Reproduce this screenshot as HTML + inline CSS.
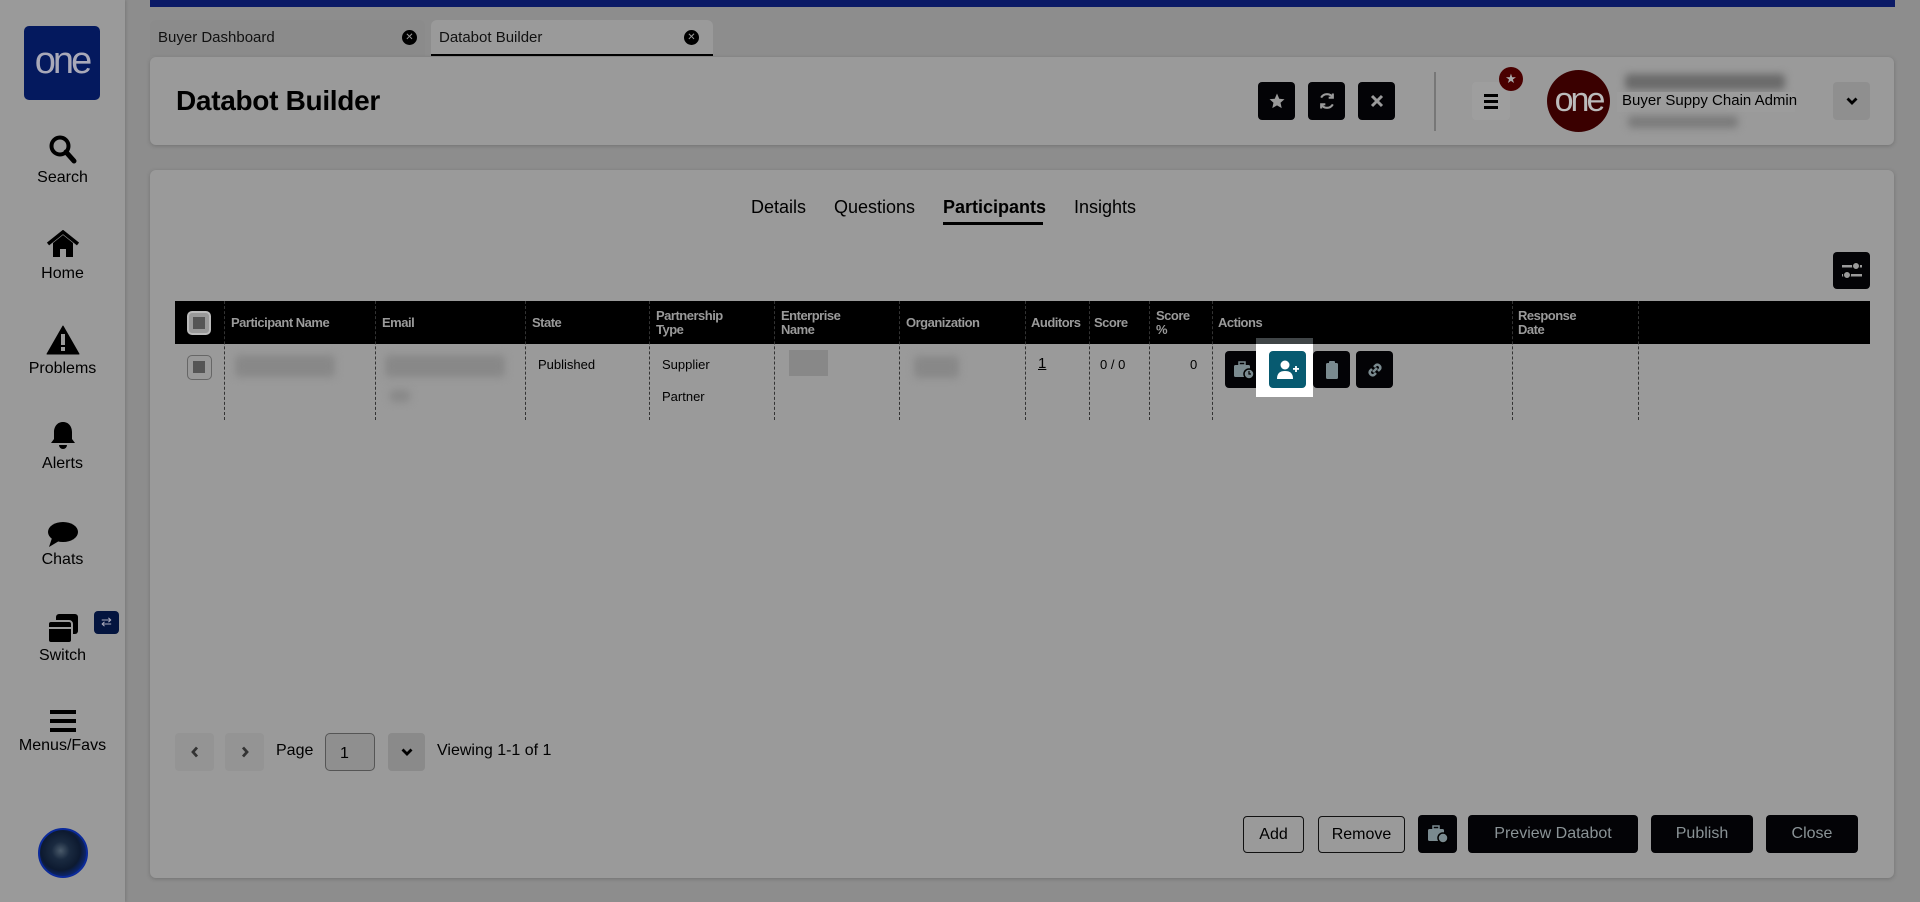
<!DOCTYPE html>
<html><head><meta charset="utf-8"><style>
*{box-sizing:border-box;margin:0;padding:0}
body{width:1920px;height:902px;background:#8d8d8d;font-family:"Liberation Sans",Arial,sans-serif;position:relative;overflow:hidden;color:#000}
.a{position:absolute}
.side{left:0;top:0;width:125px;height:902px;background:#9a9a9a;box-shadow:1px 0 3px rgba(0,0,0,.15)}
.logo{left:24px;top:26px;width:76px;height:74px;background:#04195e;border-radius:5px;color:#a9a9b8;font-size:38px;letter-spacing:-3px;text-align:center;line-height:70px}
.nav{left:0;width:125px;text-align:center;font-size:16px;color:#000}
.blue{left:150px;top:0;width:1745px;height:7px;background:#0b1a66}
.tab{top:20px;height:36px;border-radius:6px 6px 0 0;font-size:15px;padding:9px 8px;color:#111}
.card{background:#9a9a9a;border-radius:6px;box-shadow:0 1px 4px rgba(0,0,0,.2)}
.bb{background:#030306;border-radius:4px;color:#9aa;display:flex;align-items:center;justify-content:center}
.th{top:301px;height:43px;font-weight:bold;font-size:13px;color:#9a9a9a;line-height:14px;display:flex;align-items:center;letter-spacing:-.5px}
.dv{top:301px;height:119px;border-left:1px dashed #333;width:0}
.td{font-size:13px;color:#000}
.blur{background:#888;filter:blur(4px);border-radius:4px}
.btn{height:37px;border-radius:4px;font-size:16px;display:flex;align-items:center;justify-content:center}
.out{border:1px solid #111;color:#000}
.pg{display:flex;align-items:center;justify-content:center}
</style></head><body>
<div class="a side"></div>
<div class="a logo">one</div>
<div class="a nav" style="top:134px"><svg width="30" height="32" viewBox="0 0 30 32"><circle cx="12" cy="12" r="8.5" fill="none" stroke="#000" stroke-width="4"/><path d="M18 18l8 9" stroke="#000" stroke-width="5" stroke-linecap="round"/></svg><div style="margin-top:-2px">Search</div></div>
<div class="a nav" style="top:230px"><svg width="34" height="28" viewBox="0 0 34 28"><path d="M2 14L17 2l15 12" fill="none" stroke="#000" stroke-width="3.5"/><path d="M7 13l10-8 10 8v14h-7v-8h-6v8H7z"/></svg><div style="margin-top:2px">Home</div></div>
<div class="a nav" style="top:325px"><svg width="34" height="30" viewBox="0 0 34 30"><path d="M17 1L33 29H1z" stroke="#000" stroke-width="1" stroke-linejoin="round"/><rect x="15" y="9" width="4" height="11" fill="#9a9a9a"/><rect x="15" y="22" width="4" height="4" fill="#9a9a9a"/></svg><div style="margin-top:0">Problems</div></div>
<div class="a nav" style="top:420px"><svg width="30" height="30" viewBox="0 0 30 30"><path d="M15 2c-6 0-9 5-9 10v7l-3 4h24l-3-4v-7c0-5-3-10-9-10z"/><path d="M11 25a4 4 0 008 0z"/></svg><div style="margin-top:0">Alerts</div></div>
<div class="a nav" style="top:520px"><svg width="34" height="28" viewBox="0 0 34 28"><ellipse cx="17" cy="12" rx="15" ry="10"/><path d="M6 18L3 27l10-6z"/></svg><div style="margin-top:-2px">Chats</div></div>
<div class="a nav" style="top:612px"><svg width="34" height="32" viewBox="0 0 34 32"><rect x="10" y="2" width="22" height="20" rx="3"/><rect x="2" y="9" width="24" height="22" rx="3" stroke="#9a9a9a" stroke-width="2"/><rect x="3" y="15" width="22" height="2" fill="#9a9a9a"/></svg><div style="margin-top:-2px">Switch</div></div>
<div class="a" style="left:94px;top:611px;width:25px;height:23px;background:#04153f;border-radius:4px;color:#aab;font-size:13px;text-align:center;line-height:22px">⇄</div>
<div class="a nav" style="top:708px"><svg width="30" height="26" viewBox="0 0 30 26"><rect x="2" y="2" width="26" height="4"/><rect x="2" y="11" width="26" height="4"/><rect x="2" y="20" width="26" height="4"/></svg><div style="margin-top:-2px">Menus/Favs</div></div>
<div class="a" style="left:38px;top:828px;width:50px;height:50px;border-radius:50%;background:radial-gradient(circle at 45% 45%,#4a5a6a 0,#1a2a40 25%,#0d1a30 55%,#0a2a8a 80%,#061540);border:2px solid #0b2a9a"></div>

<div class="a blue"></div>
<div class="a tab" style="left:150px;width:275px;background:#8b8b8b">Buyer Dashboard<span class="a" style="right:8px;top:10px;width:15px;height:15px;border-radius:50%;background:#000;color:#999;font-size:10px;line-height:15px;text-align:center">✕</span></div>
<div class="a tab" style="left:431px;width:282px;background:#9a9a9a;border-bottom:2px solid #000">Databot Builder<span class="a" style="right:14px;top:10px;width:15px;height:15px;border-radius:50%;background:#000;color:#999;font-size:10px;line-height:15px;text-align:center">✕</span></div>

<div class="a card" style="left:150px;top:57px;width:1744px;height:88px"></div>
<div class="a" style="left:176px;top:85px;font-size:28px;font-weight:bold;letter-spacing:-.3px">Databot Builder</div>
<div class="a bb" style="left:1258px;top:82px;width:37px;height:38px"><svg width="18" height="18" viewBox="0 0 24 24"><path fill="#9a9a9a" d="M12 2l3 7 7 .6-5.3 4.7 1.6 7.2L12 17.8 5.7 21.5l1.6-7.2L2 9.6 9 9z"/></svg></div>
<div class="a bb" style="left:1308px;top:82px;width:37px;height:38px"><svg width="20" height="20" viewBox="0 0 24 24" fill="none" stroke="#9a9a9a" stroke-width="2.5"><path d="M19 8a8 8 0 00-14 0M5 16a8 8 0 0014 0"/><path d="M19 3v5h-5M5 21v-5h5"/></svg></div>
<div class="a bb" style="left:1358px;top:82px;width:37px;height:38px"><svg width="14" height="14" viewBox="0 0 14 14" stroke="#9a9a9a" stroke-width="3"><path d="M2 2l10 10M12 2L2 12"/></svg></div>
<div class="a" style="left:1434px;top:72px;width:2px;height:59px;background:#777"></div>
<div class="a" style="left:1472px;top:82px;width:38px;height:38px;background:#9e9e9e;border-radius:4px"><div class="a" style="left:12px;top:12px;width:14px;height:3px;background:#000"></div><div class="a" style="left:12px;top:18px;width:14px;height:3px;background:#000"></div><div class="a" style="left:12px;top:24px;width:14px;height:3px;background:#000"></div></div>
<div class="a" style="left:1499px;top:67px;width:24px;height:24px;border-radius:50%;background:#4a0000;color:#aaa;font-size:13px;text-align:center;line-height:24px">★</div>
<div class="a" style="left:1547px;top:70px;width:63px;height:62px;border-radius:50%;background:#3a0000;color:#bbb;font-size:34px;letter-spacing:-3px;text-align:center;line-height:60px">one</div>
<div class="a blur" style="left:1625px;top:74px;width:160px;height:16px;background:#6a6a6a"></div>
<div class="a" style="left:1617px;top:92px;width:178px;height:20px;background:#9c9c9c"></div>
<div class="a" style="left:1622px;top:92px;font-size:15px">Buyer Suppy Chain Admin</div>
<div class="a blur" style="left:1628px;top:116px;width:110px;height:12px;background:#7a7a7a"></div>
<div class="a pg" style="left:1833px;top:82px;width:37px;height:38px;background:#8f8f8f;border-radius:4px"><svg width="12" height="8" viewBox="0 0 12 8"><path d="M1.5 1.5L6 6l4.5-4.5" fill="none" stroke="#000" stroke-width="2.8"/></svg></div>

<div class="a card" style="left:150px;top:170px;width:1744px;height:708px"></div>
<div class="a" style="left:751px;top:197px;font-size:18px">Details</div>
<div class="a" style="left:834px;top:197px;font-size:18px">Questions</div>
<div class="a" style="left:943px;top:197px;font-size:18px;font-weight:bold">Participants</div>
<div class="a" style="left:943px;top:222px;width:100px;height:3px;background:#000"></div>
<div class="a" style="left:1074px;top:197px;font-size:18px">Insights</div>
<div class="a bb" style="left:1833px;top:252px;width:37px;height:37px"><svg width="24" height="22" viewBox="0 0 24 22" fill="#9a9a9a"><rect x="2" y="5" width="20" height="2.5"/><circle cx="16" cy="6" r="3.5" stroke="#000" stroke-width="1"/><rect x="2" y="14" width="20" height="2.5"/><circle cx="7" cy="15" r="3.5" stroke="#000" stroke-width="1"/></svg></div>

<div class="a" style="left:175px;top:301px;width:1695px;height:43px;background:#000"></div>
<div class="a" style="left:187px;top:311px;width:24px;height:24px;border-radius:5px;background:#999;border:2px solid #bbb"><div style="margin:4px;width:12px;height:12px;background:#555"></div></div>
<div class="a th" style="left:231px">Participant Name</div>
<div class="a th" style="left:382px">Email</div>
<div class="a th" style="left:532px">State</div>
<div class="a th" style="left:656px">Partnership<br>Type</div>
<div class="a th" style="left:781px">Enterprise<br>Name</div>
<div class="a th" style="left:906px">Organization</div>
<div class="a th" style="left:1031px">Auditors</div>
<div class="a th" style="left:1094px">Score</div>
<div class="a th" style="left:1156px">Score<br>%</div>
<div class="a th" style="left:1218px">Actions</div>
<div class="a th" style="left:1518px">Response<br>Date</div>
<div class="a dv" style="left:224px"></div><div class="a dv" style="left:375px"></div><div class="a dv" style="left:525px"></div><div class="a dv" style="left:649px"></div><div class="a dv" style="left:774px"></div><div class="a dv" style="left:899px"></div><div class="a dv" style="left:1025px"></div><div class="a dv" style="left:1089px"></div><div class="a dv" style="left:1149px"></div><div class="a dv" style="left:1212px"></div><div class="a dv" style="left:1512px"></div><div class="a dv" style="left:1638px"></div>

<div class="a" style="left:187px;top:355px;width:25px;height:25px;border-radius:5px;border:1.5px solid #666;background:#999"><div style="margin:5px;width:12px;height:12px;background:#555"></div></div>
<div class="a blur" style="left:235px;top:355px;width:100px;height:22px"></div>
<div class="a blur" style="left:385px;top:355px;width:120px;height:22px"></div>
<div class="a blur" style="left:390px;top:390px;width:20px;height:12px"></div>
<div class="a td" style="left:538px;top:357px">Published</div>
<div class="a td" style="left:662px;top:357px">Supplier</div>
<div class="a td" style="left:662px;top:389px">Partner</div>
<div class="a" style="left:789px;top:350px;width:39px;height:26px;background:#888"></div>
<div class="a blur" style="left:914px;top:356px;width:45px;height:22px"></div>
<div class="a td" style="left:1038px;top:355px;text-decoration:underline;font-size:15px">1</div>
<div class="a td" style="left:1100px;top:357px">0 / 0</div>
<div class="a td" style="left:1190px;top:357px">0</div>

<div class="a bb" style="left:1225px;top:351px;width:37px;height:37px"><svg width="22" height="20" viewBox="0 0 22 20" fill="#7a8a8f"><rect x="6" y="2" width="6" height="3" fill="none" stroke="#7a8a8f" stroke-width="1.5"/><rect x="1" y="5" width="16" height="12" rx="1.5"/><circle cx="16" cy="14" r="5" stroke="#000" stroke-width="1.5"/><path d="M16 11v3h2" stroke="#000" stroke-width="1.2" fill="none"/></svg></div>
<div class="a" style="left:1256px;top:338px;width:57px;height:59px;background:#fff"><div style="height:6px;background:#404547"></div></div>
<div class="a" style="left:1269px;top:351px;width:37px;height:37px;background:#075a70;border-radius:4px"><svg class="a" style="left:7px;top:8px" width="24" height="22" viewBox="0 0 24 22" fill="#fff"><circle cx="9" cy="6" r="4.5"/><path d="M1 20c0-6 3-8 8-8s8 2 8 8z"/><rect x="17" y="9" width="6" height="1.8"/><rect x="19.1" y="7" width="1.8" height="6"/></svg></div>
<div class="a bb" style="left:1313px;top:351px;width:37px;height:37px"><svg width="14" height="20" viewBox="0 0 14 20" fill="#7a8a8f"><rect x="1" y="3" width="12" height="16" rx="1.5"/><rect x="4" y="1" width="6" height="4" rx="1"/></svg></div>
<div class="a bb" style="left:1356px;top:351px;width:37px;height:37px"><svg width="20" height="20" viewBox="0 0 20 20" fill="none" stroke="#7a8a8f" stroke-width="2.5"><path d="M9 7l2-2a3 3 0 014 4l-2 2M11 13l-2 2a3 3 0 01-4-4l2-2M8 12l4-4"/></svg></div>

<div class="a pg" style="left:175px;top:733px;width:39px;height:38px;background:#949494;border-radius:4px"><svg width="8" height="12" viewBox="0 0 8 12"><path d="M6 1.5L2 6l4 4.5" fill="none" stroke="#333" stroke-width="2.8"/></svg></div>
<div class="a pg" style="left:225px;top:733px;width:39px;height:38px;background:#949494;border-radius:4px"><svg width="8" height="12" viewBox="0 0 8 12"><path d="M2 1.5L6 6l-4 4.5" fill="none" stroke="#333" stroke-width="2.8"/></svg></div>
<div class="a" style="left:276px;top:742px;font-size:16px">Page</div>
<div class="a" style="left:325px;top:733px;width:50px;height:38px;border:1px solid #555;border-radius:5px;background:#8f8f8f;font-size:16px;padding:11px 14px">1</div>
<div class="a pg" style="left:388px;top:733px;width:37px;height:38px;background:#8a8a8a;border-radius:4px"><svg width="12" height="8" viewBox="0 0 12 8"><path d="M1.5 1.5L6 6l4.5-4.5" fill="none" stroke="#000" stroke-width="2.8"/></svg></div>
<div class="a" style="left:437px;top:742px;font-size:16px">Viewing 1-1 of 1</div>

<div class="a btn out" style="left:1243px;top:816px;width:61px">Add</div>
<div class="a btn out" style="left:1318px;top:816px;width:87px">Remove</div>
<div class="a bb" style="left:1418px;top:815px;width:39px;height:38px"><svg width="22" height="20" viewBox="0 0 22 20" fill="#7a8a8f"><rect x="6" y="2" width="6" height="3" fill="none" stroke="#7a8a8f" stroke-width="1.5"/><rect x="1" y="5" width="16" height="12" rx="1.5"/><circle cx="16" cy="14" r="5" stroke="#000" stroke-width="1.5"/></svg></div>
<div class="a btn bb" style="left:1468px;top:815px;width:170px;height:38px;color:#8a9396">Preview Databot</div>
<div class="a btn bb" style="left:1651px;top:815px;width:102px;height:38px;color:#8a9396">Publish</div>
<div class="a btn bb" style="left:1766px;top:815px;width:92px;height:38px;color:#8a9396">Close</div>
</body></html>
